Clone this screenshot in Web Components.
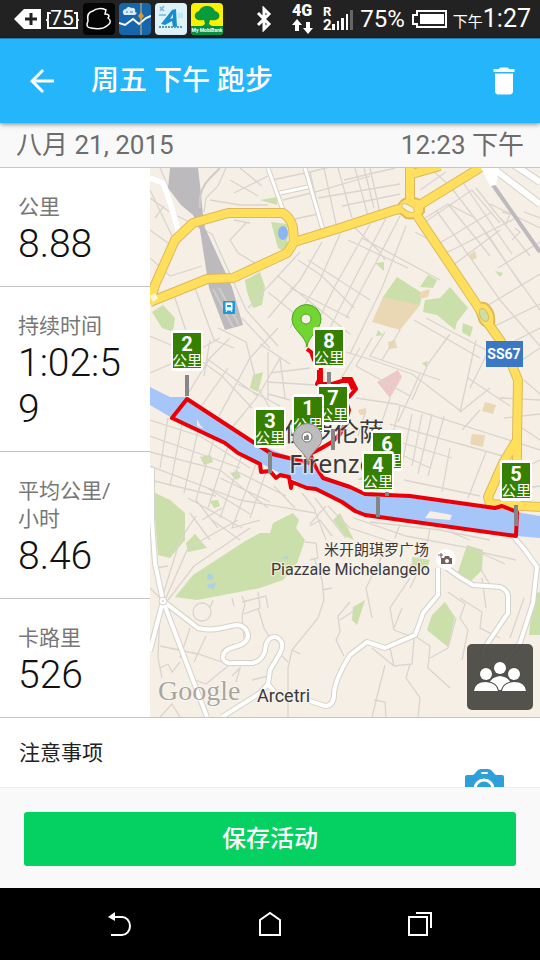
<!DOCTYPE html>
<html lang="zh-CN">
<head>
<meta charset="utf-8">
<meta name="viewport" content="width=device-width, initial-scale=1">
<title>周五 下午 跑步</title>
<style>
  body {
    margin: 0;
    background: #000;
    font-family: Roboto, "Noto Sans CJK SC", sans-serif;
  }
</style>
</head>
<body>
<run-page>
  <status-bar slot="status"></status-bar>
  <app-bar slot="top">周五 下午 跑步</app-bar>
  <date-bar slot="top">
    <span slot="date">八月 21, 2015</span>
    <span slot="time">12:23 下午</span>
  </date-bar>
  <stat-card slot="stats" label="公里">8.88</stat-card>
  <stat-card slot="stats" label="持续时间">1:02:59</stat-card>
  <stat-card slot="stats" label="平均公里/小时">8.46</stat-card>
  <stat-card slot="stats" label="卡路里">526</stat-card>
  <run-map slot="map"></run-map>
  <notes-row slot="bottom">注意事项</notes-row>
  <save-bar slot="bottom">保存活动</save-bar>
  <nav-bar slot="nav"></nav-bar>
</run-page>

<script>
class RunPage extends HTMLElement {
  constructor() {
    super();
    this.attachShadow({ mode: "open" });
  }

  connectedCallback() {
    this.shadowRoot.innerHTML = `
    <style>
    :host {
      display: flex;
      flex-direction: column;
      min-height: 100vh;
    }
    .content {
      display: grid;
      grid-template-columns: 150px 1fr;
      background: #fff;
    }
    .stats {
      display: flex;
      flex-direction: column;
    }
    </style>
    <slot name="status"></slot>
    <slot name="top"></slot>
    <main class="content">
      <div class="stats"><slot name="stats"></slot></div>
      <slot name="map"></slot>
    </main>
    <slot name="bottom"></slot>
    <slot name="nav"></slot>
    `;
  }
}

class StatusBar extends HTMLElement {
  constructor() {
    super();
    this.attachShadow({ mode: "open" });
  }

  connectedCallback() {
    this.shadowRoot.innerHTML = `
    <style>
    :host {
      display: flex;
      justify-content: space-between;
      align-items: center;
      height: 38px;
      padding: 0 9px 0 14px;
      background: #222;
      color: #fff;
    }
    .group {
      display: flex;
      align-items: center;
      gap: 4px;
    }
    .right { gap: 6px; }
    .bluetooth { margin-right: 10px; }
    svg { display: block; }
    .clock, .percent {
      font-size: 25px;
      line-height: 38px;
    }
    .percent { font-size: 24px; }
    .clock small {
      font-size: 15px;
      line-height: 15px;
    }
    </style>
    <div class="group">
      <svg width="28" height="22" viewBox="0 0 28 22">
        <path d="M0 11 10 1h17v20H10z" fill="#fff"/>
        <path d="M17 5v12M11 11h12" stroke="#222" stroke-width="3"/>
      </svg>
      <svg width="33" height="28" viewBox="0 0 33 28">
        <path d="M5 8H2v6L1 15l1 1v7h29v-7l1-1-1-1V8h-3" fill="none" stroke="#fff" stroke-width="2"/>
        <text x="16" y="20" font-size="21" text-anchor="middle" fill="#fff" stroke="#222" stroke-width="2" paint-order="stroke">75</text>
      </svg>
      <svg width="32" height="32" viewBox="0 0 32 32">
        <rect width="32" height="32" rx="4" fill="#050505"/>
        <path d="M8 25C4 25 3 22 5 18 4 13 5 9 10 8 13 5 19 5 23 7L22 11C26 11 27 13 25 15 28 17 28 20 25 22 22 25 17 27 8 25z" fill="none" stroke="#fff" stroke-width="1.500"/>
      </svg>
      <svg width="32" height="32" viewBox="0 0 32 32">
        <rect width="32" height="32" rx="4" fill="#1766ab"/>
        <path d="M4 10a3 3 0 0 1 3-4 3 3 0 0 1 5-1 3 3 0 0 1 4 4l2 1-2 2H5z" fill="#d8edfb"/>
        <path d="M7 9h2M11 9h3" stroke="#3c80b8"/>
        <path d="M0 20 6 22l8-6 6 5 7-6 5-2" fill="none" stroke="#fff" stroke-width="2"/>
        <path d="M22 0v32" stroke="#d8b87a"/>
        <path d="m22 9 3 4-3 4-3-4z" fill="#d99a35"/>
      </svg>
      <svg width="32" height="32" viewBox="0 0 32 32">
        <rect width="32" height="32" rx="4" fill="#def2fa"/>
        <path d="M5 4 9 8M9 3 5 8M4 12h7" stroke="#75b5d7" stroke-width="1.500"/>
        <path d="M6 21 17 7l4-1 1 18h-4l-1-6-7 4z" fill="#168dd3"/>
        <path d="m15 16 3-5v4z" fill="#def2fa"/>
        <path d="M23 10h5v5h-5z" fill="#c0e7ef"/>
        <path d="M4 24h24" stroke="#5b99bb" stroke-width="2" stroke-dasharray="2 1"/>
      </svg>
      <svg width="32" height="32" viewBox="0 0 32 32">
        <rect width="32" height="32" rx="4" fill="#fbf100"/>
        <path d="M0 23h32v5a4 4 0 0 1-4 4H4a4 4 0 0 1-4-4z" fill="#079044"/>
        <path d="M5 16c-3-4 0-7 3-8 2-4 5-5 8-5s6 1 8 5c4 1 6 5 3 8-3 2-6 1-8 1l-1 4 3 2H11l3-2-1-4c-3 0-5 1-8-1z" fill="#099a3c"/>
        <text x="16" y="29" font-size="5" font-weight="700" text-anchor="middle" fill="#fff">My MobiBank</text>
      </svg>
    </div>
    <div class="group right">
      <svg class="bluetooth" width="16" height="26" viewBox="0 0 16 26" fill="none" stroke="#fff" stroke-width="3">
        <path d="m2 7 11 11-5 5V3l5 5L2 19"/>
      </svg>
      <svg width="28" height="34" viewBox="0 0 28 34">
        <text x="14" y="14" font-size="16" font-weight="900" text-anchor="middle" fill="#fff">4G</text>
        <path d="m9 17 5 6h-3v6H7v-6H4zM20 32l-5-6h3v-6h4v6h3z" fill="#fff"/>
      </svg>
      <svg width="32" height="34" viewBox="0 0 32 34" fill="#fff">
        <text x="1" y="14" font-size="13" font-weight="700">R</text>
        <text x="1" y="28" font-size="15" font-weight="700">2</text>
        <path d="M10 22h3v6h-3zM15 19h2v9h-2zM19 16h3v12h-3zM24 12h2v16h-2z"/>
        <path d="M28 8h3v20h-3z" fill="#666"/>
      </svg>
      <span class="percent">75%</span>
      <svg width="36" height="18" viewBox="0 0 36 18">
        <path d="M6 1h29v16H6v-3H2V5h4z" fill="none" stroke="#fff" stroke-width="2"/>
        <path d="M9 4h24v10H9z" fill="#fff"/>
      </svg>
      <span class="clock"><small>下午</small>1:27</span>
    </div>
    `;
  }
}

class AppBar extends HTMLElement {
  constructor() {
    super();
    this.attachShadow({ mode: "open" });
  }

  connectedCallback() {
    this.shadowRoot.innerHTML = `
    <style>
    :host {
      display: flex;
      align-items: center;
      height: 85px;
      padding: 0 18px 0 24px;
      box-sizing: border-box;
      position: relative;
      border-top: 1px solid #1b7fb0;
      background: #25b5fb;
      color: #fff;
      box-shadow: 0 1px 5px rgba(0, 0, 0, 0.5);
    }
    h1 {
      flex: 1;
      margin: 0 0 0 31px;
      font-size: 28px;
      font-weight: 500;
      line-height: 36px;
    }
    button {
      padding: 0;
      border: 0;
      background: none;
      color: inherit;
      cursor: pointer;
    }
    svg {
      display: block;
      fill: currentColor;
    }
    </style>
    <button aria-label="返回">
      <svg width="36" height="36" viewBox="0 0 24 24"><path d="M20 11H7.830l5.590-5.590L12 4l-8 8 8 8 1.410-1.410L7.830 13H20v-2z"/></svg>
    </button>
    <h1><slot></slot></h1>
    <button aria-label="删除">
      <svg width="36" height="36" viewBox="0 0 24 24"><path d="M6 19c0 1.100.9 2 2 2h8c1.100 0 2-.9 2-2V7H6v12zM19 4h-3.500l-1-1h-5l-1 1H5v2h14V4z"/></svg>
    </button>
    `;
  }
}

class DateBar extends HTMLElement {
  constructor() {
    super();
    this.attachShadow({ mode: "open" });
  }

  connectedCallback() {
    this.shadowRoot.innerHTML = `
    <style>
    :host {
      display: flex;
      justify-content: space-between;
      align-items: center;
      box-sizing: border-box;
      height: 45px;
      padding: 0 16px;
      border-bottom: 1px solid #c8c8c8;
      background: #f9f9f9;
      color: #6d6d6d;
      font-size: 26px;
      line-height: 36px;
    }
    </style>
    <slot name="date"></slot>
    <slot name="time"></slot>
    `;
  }
}

class StatCard extends HTMLElement {
  constructor() {
    super();
    this.attachShadow({ mode: "open" });
  }

  connectedCallback() {
    this.shadowRoot.innerHTML = `
    <style>
    :host {
      display: block;
      padding: 25px 24px 19px 18px;
      border-bottom: 1px solid #c4c4c4;
      background: #fff;
    }
    .label {
      color: #777;
      font-size: 21px;
      line-height: 28px;
    }
    .value {
      color: #111;
      font-size: 39px;
      font-weight: 300;
      line-height: 46px;
      word-break: break-all;
    }
    </style>
    <div class="label">${this.getAttribute("label")}</div>
    <div class="value"><slot></slot></div>
    `;
  }
}

// kilometre flags, drawn in this order
const flags = [
  { km: 8, x: 163, y: 159 },
  { km: 7, x: 167, y: 216 },
  { km: 1, x: 142, y: 226 },
  { km: 2, x: 21, y: 162 },
  { km: 3, x: 104, y: 239 },
  { km: 6, x: 221, y: 262 },
  { km: 4, x: 212, y: 283 },
  { km: 5, x: 350, y: 292 },
];

class RunMap extends HTMLElement {
  constructor() {
    super();
    this.attachShadow({ mode: "open" });
  }

  connectedCallback() {
    this.render();
  }

  flag(f) {
    return `
      <g transform="translate(${f.x} ${f.y})">
        <rect width="32" height="41" rx="3" fill="#fff"/>
        <rect x="2" y="3" width="28" height="35" fill="#358000"/>
        <text x="16" y="21" font-size="20" font-weight="700" text-anchor="middle" fill="#fff">${f.km}</text>
        <text x="16" y="36" font-size="15" text-anchor="middle" fill="#fff">公里</text>
      </g>`;
  }

  post(f) {
    return `<path d="M${f.x + 16} ${f.y + 45}v21"/>`;
  }

  render() {
    const white = `
      M0 10 13 15 20 34 30 69
      M2 300 2 352 5 395 13 433 0 483 M13 433 57 549
      M13 433 48 460Q60 463 72 460L86 457Q96 457 98 467 98 476 84 479 72 482 73 490 74 496 84 495L103 495Q112 493 115 483 116 468 126 469 136 474 130 485L120 502 118 516 125 525
      M72 549 110 525 118 516
      M160 533 175 538Q183 538 184 528 183 515 200 487L217 474 235 480 265 467Q270 455 273 445L288 427V400
      M297 400Q310 410 323 417L350 419Q358 422 358 429V445L333 482 335 492
      M363 368 375 382 387 399 383 435 370 475 350 499`;
    const yellow = `
      M0 134 5 117 25 72 43 55 78 45 133 45Q141 50 143 60L144 74 137 85 83 110 57 111 0 134
      M144 74 190 60 245 42 262 39
      M260 -4V36M262 6 290 -2
      M268 38 336 -4
      M262 40 327 137 337 154 350 172 360 192 368 212 367 269V339
      M367 272 353 295 338 329 340 336 390 339`;
    this.shadowRoot.innerHTML = `
    <style>
    :host {
      display: block;
      position: relative;
      overflow: hidden;
      border-bottom: 1px solid #c4c4c4;
      background: #f5efe6;
    }
    .map {
      position: absolute;
      inset: 0;
      width: 100%;
      height: 100%;
    }
    button {
      position: absolute;
      right: 7px;
      bottom: 7px;
      padding: 6px;
      border: 0;
      border-radius: 5px;
      background: rgba(65, 64, 60, 0.9);
      cursor: pointer;
    }
    button svg { display: block; }
    </style>
    <svg class="map" viewBox="0 0 390 549" preserveAspectRatio="xMidYMid slice">
      <g fill="#cbdfaa">
        <path d="M95 112 110 104 115 119 112 137 103 140 97 124zM121 54 137 56 138 85 128 80zM110 32 127 29V37zM2 144 13 137 25 150 23 164 12 160z"/>
        <path d="M247 109 272 125 270 137 257 135 243 137 233 129zM300 119 318 140 307 154 305 162 287 147 273 144 275 132 290 130zM278 107 287 112 283 120 270 119zM313 155 323 159 320 169 312 164zM225 95 234 94V103zM345 103 353 105 350 109z"/>
        <path d="M103 207 113 204 108 224 100 220zM50 289 61 287 63 294 54 297zM80 305 88 303 91 309 86 312zM60 333 68 332 70 338 64 340zM228 162 233 167 226 168zM272 195 278 193 276 199zM207 312 218 305 216 312z"/>
        <path d="M3 324 20 332 35 345 35 372 20 390 8 387zM36 375 45 366 57 380 38 384z"/>
        <path d="M25 429 43 407 97 372 110 365 120 365 123 355 143 345 149 352 146 360 155 372 147 395 133 412 110 420 47 432z"/>
        <path d="M183 352 190 345 204 372 195 368zM317 377 333 382 332 402 320 414 307 407zM295 434 305 449 298 479 277 462 282 447zM215 432 207 457 202 452 203 439zM390 424 383 426 379 467H390zM262 389 280 392 276 402 262 398z"/>
      </g>
      <g fill="#ead7b4">
        <path d="M233 129 270 137 250 162 222 154zM270 124 280 121 278 129 270 131zM319 87 325 83 327 90 322 92zM238 174 245 172 247 180 239 181zM322 266 335 267 333 279 320 276zM335 234 346 237 343 246 332 243zM208 242 216 240 216 246 210 247z"/>
      </g>
      <path d="M227 214 248 202 252 209 240 230z" fill="#eec8c8"/>

      <!-- small streets -->
      <g fill="none" stroke="#dad4ce" stroke-width="1.300">
        <path d="M0 30 20 44 62 66M0 62 22 78M0 22 24 72M10 0 20 22M5 50 14 38M0 90 20 108 52 98M62 66 96 142 128 178M84 52 100 55M96 55 80 72 88 85 110 98M60 32 90 37 118 37M76 0 68 18 56 30 54 44"/>
        <path d="M80 12 108 28M90 0 112 18M84 25 118 8M122 12 160 4 200 -6M133 32 165 24 220 8M140 52 168 46M160 4 170 48M174 0 186 56M188 0 202 50M205 0 218 48M220 0 230 45M168 30 250 16M192 38 250 26"/>
        <path d="M150 84 128 108 98 140M148 92 172 108 204 140M172 74 150 112 118 150M190 66 170 112 140 160M220 56 185 118 155 180M236 50 205 110 180 160M250 48 224 98 196 150M256 58 232 120 200 186M128 108 200 166M118 124 150 150M158 92 220 132M198 72 258 100M212 70 290 112M140 120 200 150M205 60 228 82 235 92"/>
        <path d="M275 50 298 36 325 50 360 100 390 142M286 42 322 92 350 132 390 178M298 36 340 88M265 64 288 76 328 134M288 76 342 44M294 86 366 50M302 98 350 62M272 56 322 22 350 55M300 18 340 70 372 118M310 10 362 86M326 20 380 88M340 36 390 60M348 100 390 74M330 142 390 106M345 158 390 136M355 178 390 160"/>
        <path d="M352 44 360 46 356 56 350 50M365 60 370 64 362 72M374 44 390 50M280 0 300 18M270 22 296 4M214 0 224 40M194 12 245 0"/>
        <path d="M0 168 40 185 72 208 102 240M0 205 30 192 70 170M25 130 45 190M45 120 64 172 84 180M68 160 96 174 108 220 120 240M92 150 120 180M60 172 54 208M34 232 60 190 80 170M50 240 78 200M68 250 100 190 128 160M80 262 108 228 130 190M56 190 108 228M110 176 140 196M118 184 118 232M130 190 135 230M118 214 165 217M118 226 140 232M120 205 160 200M88 216 130 238"/>
        <path d="M0 252 50 268 100 300M0 268 90 300M0 284 70 302 118 340M0 298 90 332 165 345M0 312 66 328M18 250 10 300M32 256 20 318M48 263 34 325M64 270 46 332 68 360M78 278 58 340M92 287 70 350M106 296 82 360 110 352M116 304 100 350M38 330 92 360M54 318 100 346M70 310 120 334M84 302 136 328M124 318 145 340"/>
        <path d="M152 325 164 340 176 372M165 330 180 350 196 370M178 338 200 360 260 380M160 356 176 338M204 350 256 368 320 380 355 396M220 354 290 362 340 372M250 356 245 370M280 360 276 382 260 398M300 364 320 372M330 384 366 392"/>
        <path d="M196 184 222 192 262 206 312 244M210 180 190 212M222 170 206 198 260 228M235 164 220 188 290 212M250 162 232 192M264 152 330 190M276 150 340 184M300 166 278 196 262 232M326 172 310 244M340 180 320 220M206 230 246 236 390 282M216 242 208 268M240 230 216 300M250 238 234 300M262 246 252 296M272 246 262 298M282 246 268 306M294 248 278 308M240 256 310 276M236 270 302 290M250 286 280 300M310 244 340 220M318 210 360 238M350 230 390 232M354 250 390 246M270 206 248 254M312 262 330 242M254 312 330 328M300 280 292 324M310 276 360 290M336 284 318 330M372 260 390 272M374 300 390 292M376 320 390 318M374 212 390 226M366 196 390 180"/>
        <path d="M15 432 38 380 88 352M18 432 44 398 100 360M40 345 60 372M46 348 30 372 12 430M52 352 72 340M62 352 90 372M6 400 18 398M0 420 10 430M10 440 8 490"/>
        <path d="M43 444A9 9 0 1 0 61 444 9 9 0 1 0 43 444M63 432 60 440M82 430 84 438M92 428 95 436 92 448 94 470M92 434 116 428 118 440M94 446 110 440 108 424M108 440 114 460 120 470M10 478 48 486 84 498M40 460 30 490M56 468 44 494M8 490 12 510M10 500 18 496 22 504 30 494M45 512 56 516 78 498M82 508 90 500 86 514M102 512 118 508M10 549 22 536 30 549"/>
        <path d="M155 374 166 375 168 390 160 392M164 390 172 412 174 432 168 450 142 482 138 500V549M172 422 182 420M142 482 150 486M132 488 138 494M200 434 188 448 190 464 186 472 194 488M160 358 170 352 182 368"/>
        <path d="M236 380 216 420 222 450M205 442 190 452M260 410 240 440 244 462 260 468M272 395 260 420M252 440 244 460M262 466 280 478 278 500 300 520M264 470 262 496 244 498 222 480M260 496 256 510 270 530 268 549M235 497 222 549M224 532 235 534 236 549M240 480 244 498M298 424 315 436 310 450 318 462M310 430 332 444 330 460 350 470M306 450 298 480 280 490M318 462 312 492M332 410 336 440M342 420 330 400M374 430 360 470"/>
      </g>

      <!-- railway -->
      <path d="M20 0H48L50 17 53 47 55 60 72 97 82 119 93 157 75 162 59 120 50 62 43 47 31 37 18 20z" fill="#bdbabd"/>
      <path d="M50 40Q48 22 60 10L70 0M63 121 83 159M69 120 89 157" fill="none" stroke="#cfcbca" stroke-width="2"/>
      <path d="M343 17 390 84" stroke="#bdbabd" stroke-width="4"/>

      <!-- river -->
      <path d="M0 219 20 229H38L103 274 160 297 172 310 200 317 215 325 260 328 345 340 366 344 390 348V370L366 368 215 347 190 334 150 315 110 295 75 275 22 250 0 237z" fill="#a6c6fa"/>
      <ellipse cx="133" cy="65" rx="5" ry="7" fill="#8db6f0"/>
      <circle cx="60" cy="409" r="3" fill="#b0d0e8"/>
      <path d="M57 417 66 414 64 421 58 420zM130 390 138 388V391z" fill="#b0d0e8"/>
      <path d="M47 251 50 257 54 261 47 258zM280 343 302 347 300 352 275 350z" fill="#f5efe6"/>

      <!-- main roads -->
      <g fill="none" stroke-linejoin="round">
        <path d="${white}" stroke="#d6d1ca" stroke-width="6"/>
        <path d="${white}" stroke="#fff" stroke-width="4"/>
        <path d="M0 10 13 15 20 34 30 69" stroke="#fff" stroke-width="6"/>
        <path d="M118 0 133 42M155 0 173 62M130 25 158 19" stroke="#d6d1ca" stroke-width="5"/>
        <path d="M118 0 133 42M155 0 173 62M130 25 158 19" stroke="#fff" stroke-width="3"/>
        <path d="M340 -2 390 36M360 -6 390 14" stroke="#d6d1ca" stroke-width="8"/>
        <path d="M332 -2 345 10M340 -2 390 36M360 -6 390 14" stroke="#fff" stroke-width="6"/>
        <path d="${yellow}" stroke="#ddb95c" stroke-width="10"/>
        <path d="M246 42Q251 28 262 30 275 30 274 44 268 52 256 50zM326 142Q328 132 337 136 346 144 344 156 336 162 330 154z" fill="#ffdf5c" stroke="#ddb95c" stroke-width="2"/>
        <path d="${yellow}" stroke="#ffdf5c" stroke-width="8"/>
        <ellipse cx="258" cy="40" rx="7" ry="3" transform="rotate(30 258 40)" fill="#f5efe6" stroke="#ddb95c"/>
        <ellipse cx="334" cy="147" rx="4" ry="7" transform="rotate(-25 334 147)" fill="#cbdfaa" stroke="#ddb95c"/>
      </g>
      <path d="M331 0H349L346 17 340 18z" fill="#fff"/>
      <circle cx="13" cy="433" r="4" fill="#fff" stroke="#d6d1ca"/>
      <circle cx="13" cy="433" r="1" fill="#d6d1ca"/>
      <path d="M0 128 5 125 8 130 3 134z" fill="#fff8dc"/>

      <rect x="73" y="133" width="12" height="13" rx="1" fill="#1a9ad7"/>
      <path d="M76 135h6v7h-6zM76 144l1-2M82 144l-1-2" fill="#fff" stroke="#fff"/>
      <path d="M77 137h4v2h-4z" fill="#1a9ad7"/>

      <rect x="336" y="173" width="37" height="26" fill="#3b78c3"/>
      <text x="354" y="191" font-size="14" font-weight="700" text-anchor="middle" fill="#fff">SS67</text>

      <!-- route -->
      <path d="M157 181 161 184 164 192 171 200 169 212 167 216 182 216 192 213 201 211 206 221 199 229 194 228 199 242 195 256 190 266 182 274 170 281 160 286 165 298 173 310 200 319 215 326 260 328 345 340 352 338 367 344 366 368 215 347 205 343 192 334 166 321 157 320 142 314 141 320 139 309 130 307 126 310 120 303 111 304 110 296 88 285 75 275 22 250 37 231 103 274 122 286 143 291 160 295" fill="none" stroke="#e90007" stroke-width="4" stroke-linejoin="round"/>
      <path d="M170 202V214M192 212 200 212 204 221" fill="none" stroke="#e90007" stroke-width="6"/>

      <g fill="#3a3a3a" stroke="#f8f3ec" stroke-opacity="0.6" stroke-width="3" paint-order="stroke" stroke-linejoin="round">
        <g font-family="'Noto Sans', 'Noto Sans CJK SC', sans-serif" font-size="25">
          <text x="134" y="273">佛罗伦萨</text>
          <text x="139" y="305">Firenze</text>
        </g>
        <text x="279" y="387" font-size="15" text-anchor="end">米开朗琪罗广场</text>
        <text x="280" y="407" font-size="16" text-anchor="end">Piazzale Michelangelo</text>
        <text x="107" y="534" font-size="18">Arcetri</text>
      </g>
      <text x="8" y="532" font-family="'Liberation Serif', serif" font-size="28" fill="#a8a5a0" stroke="#fff" stroke-width="1" paint-order="stroke">Google</text>

      <circle cx="296" cy="391" r="10" fill="#fff"/>
      <path d="M291 390h3l1-2h4l1 2h2v6h-11z" fill="#74615a"/>
      <circle cx="297" cy="393" r="2" fill="#fff"/>
      <path d="M291 385v5M288 387h5" stroke="#74615a"/>

      <g stroke="#868686" stroke-width="4">${flags.map(this.post).join("")}</g>
      <path d="M157 179C156 168 142 162 142 151A14.500 14.500 0 0 1 171 151C171 162 158 168 157 179z" fill="#72d532" stroke="#50a323"/>
      <circle cx="156" cy="151" r="5" fill="#f5efe6" stroke="#50a323"/>
      ${flags.map(this.flag).join("")}
      <path d="M158 296C157 284 143 280 143 270A14.500 14.500 0 0 1 172 270C172 280 159 284 158 296z" fill="#bdbdbd" stroke="#8c8c8c"/>
      <circle cx="157" cy="269" r="5" fill="#fff" stroke="#777"/>
      <path d="M154 272v-4h2l1-2 2 2v4z" fill="#888"/>
    </svg>
    <button aria-label="好友">
      <svg width="54" height="54" viewBox="0 0 54 54" fill="#fff">
        <circle cx="27" cy="18" r="6"/>
        <path d="M16 34Q18 27 27 26 36 27 38 34L34 36Q30 40 27 40 24 40 20 36z"/>
        <g stroke="#50504c" stroke-width="2" paint-order="stroke">
          <circle cx="13" cy="24" r="6"/>
          <circle cx="41" cy="24" r="6"/>
          <path d="M1 41Q2 32 13 32 24 33 25 41zM29 41Q30 33 41 32 52 32 53 41z"/>
        </g>
      </svg>
    </button>
    `;
  }
}

class NotesRow extends HTMLElement {
  constructor() {
    super();
    this.attachShadow({ mode: "open" });
  }

  connectedCallback() {
    this.shadowRoot.innerHTML = `
    <style>
    :host {
      display: flex;
      justify-content: space-between;
      align-items: center;
      height: 69px;
      padding: 0 36px 0 19px;
      background: #fff;
      color: #222;
      font-size: 21px;
      line-height: 28px;
    }
    button {
      align-self: flex-end;
      padding: 0;
      border: 0;
      background: none;
      cursor: pointer;
    }
    svg { display: block; }
    </style>
    <slot></slot>
    <button aria-label="添加照片">
      <svg width="39" height="18" viewBox="0 0 39 18">
        <path d="M0 18V8Q0 6 2 6H8Q10 5 11 3 13 0 16 0H23Q26 0 28 3 29 5 31 6H37Q39 6 39 8V18z" fill="#2e9fd8"/>
        <rect x="16" y="3" width="7" height="2" rx="1" fill="#fff"/>
        <circle cx="19" cy="20" r="9" fill="none" stroke="#fff" stroke-width="3"/>
      </svg>
    </button>
    `;
  }
}

class SaveBar extends HTMLElement {
  constructor() {
    super();
    this.attachShadow({ mode: "open" });
  }

  connectedCallback() {
    this.shadowRoot.innerHTML = `
    <style>
    :host {
      display: flex;
      padding: 24px 24px 22px;
      border-top: 1px solid #ececec;
      background: #f9f9f9;
    }
    button {
      flex: 1;
      height: 54px;
      border: 0;
      border-radius: 3px;
      background: #04d162;
      color: #fff;
      font: 500 24px/36px Roboto, "Noto Sans CJK SC", sans-serif;
      cursor: pointer;
    }
    </style>
    <button><slot></slot></button>
    `;
  }
}

class NavBar extends HTMLElement {
  constructor() {
    super();
    this.attachShadow({ mode: "open" });
  }

  connectedCallback() {
    this.shadowRoot.innerHTML = `
    <style>
    :host {
      display: flex;
      flex: 1;
      min-height: 72px;
      padding: 0 45px;
      background: #000;
    }
    button {
      flex: 1;
      display: grid;
      place-items: center;
      padding: 0;
      border: 0;
      background: none;
      cursor: pointer;
    }
    svg {
      fill: none;
      stroke: #fff;
      stroke-width: 2;
    }
    </style>
    <button aria-label="返回">
      <svg width="26" height="26" viewBox="0 0 26 26">
        <path d="M6 6H15A8 9 0 0 1 15 24H4"/>
        <path d="M1 6 8 1V10z" fill="#fff" stroke="none"/>
      </svg>
    </button>
    <button aria-label="主屏幕">
      <svg width="26" height="26" viewBox="0 0 26 26"><path d="M3 24V9L13 2 23 9V24z"/></svg>
    </button>
    <button aria-label="最近任务">
      <svg width="26" height="26" viewBox="0 0 26 26"><path d="M2 6H20V24H2zM9 2H24V17"/></svg>
    </button>
    `;
  }
}

customElements.define("run-page", RunPage);
customElements.define("status-bar", StatusBar);
customElements.define("app-bar", AppBar);
customElements.define("date-bar", DateBar);
customElements.define("stat-card", StatCard);
customElements.define("run-map", RunMap);
customElements.define("notes-row", NotesRow);
customElements.define("save-bar", SaveBar);
customElements.define("nav-bar", NavBar);
</script>
</body>
</html>
